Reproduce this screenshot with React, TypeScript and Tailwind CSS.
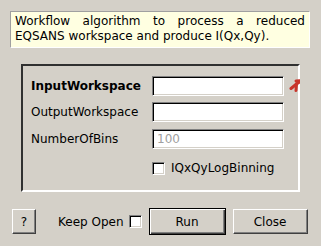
import React from "react";

const sunken =
  "border border-t-[#808080] border-l-[#808080] border-b-white border-r-white shadow-[inset_1px_1px_0_#000,inset_-1px_-1px_0_#d4d0c8] bg-white";

function Field({ label, bold, value, star }: { label: string; bold?: boolean; value?: string; star?: boolean }) {
  return (
    <div className="flex items-center h-[20px]">
      <div className={`w-[121px] shrink-0 whitespace-nowrap ${bold ? "font-bold" : ""}`}>{label}</div>
      <div className={`w-[132px] h-[20px] shrink-0 ${sunken} flex items-center pl-[4px] text-[#a0a0a0]`}>{value}</div>
      {star && (
        <div className="ml-[5px] -mt-[2px] w-[11px] h-[18px] overflow-hidden shrink-0">
          <svg width="18" height="18" viewBox="0 0 18 18">
            <g stroke="#c8342a" strokeWidth="3" strokeLinecap="round">
              <line x1="7.5" y1="8" x2="2" y2="12.5" />
              <line x1="7.5" y1="8" x2="7" y2="14.5" />
              <line x1="7.5" y1="8" x2="14" y2="4" />
              <line x1="7" y1="5" x2="14" y2="4.5" />
            </g>
          </svg>
        </div>
      )}
    </div>
  );
}

function Check() {
  return <div className={`w-[13px] h-[13px] shrink-0 ${sunken}`} />;
}

export default function App() {
  return (
    <div
      className="w-[321px] h-[246px] bg-[#d4d0c8] text-black text-[12px] overflow-hidden flex flex-col"
      style={{ fontFamily: '"DejaVu Sans", sans-serif' }}
    >
      <div className="mt-[11px] ml-[10px] mr-[11px] h-[37px] bg-[#ffffe1] border border-t-[#a0a0a0] border-l-[#a0a0a0] border-b-white border-r-white pl-[4px] pr-[4px] pt-[2px] leading-[15px] text-justify">
        Workflow algorithm to process a reduced EQSANS workspace and produce I(Qx,Qy).
      </div>

      <div className="mt-[16px] ml-[21px] w-[279px] h-[128px] border-2 border-t-[#303030] border-l-[#303030] border-b-white border-r-white pl-[8px] pt-[10px] flex flex-col">
        <Field label="InputWorkspace" bold star />
        <div className="mt-[6px]">
          <Field label="OutputWorkspace" />
        </div>
        <div className="mt-[7px]">
          <Field label="NumberOfBins" value="100" />
        </div>
        <div className="mt-[10px] ml-[121px] flex items-center gap-[6px]">
          <Check />
          <span>IQxQyLogBinning</span>
        </div>
      </div>

      <div className="mt-[16px] flex items-center h-[27px]">
        <button className="ml-[12px] w-[24px] h-[25px] bg-[#d4d0c8] border border-t-white border-l-white border-b-[#404040] border-r-[#404040] shadow-[inset_-1px_-1px_0_#808080] text-[12px]">
          ?
        </button>
        <span className="ml-[22px]">Keep Open</span>
        <div className="ml-[5px]">
          <Check />
        </div>
        <button className="ml-[7px] w-[77px] h-[27px] bg-[#d4d0c8] border border-black shadow-[inset_1px_1px_0_#fff,inset_-1px_-1px_0_#404040,inset_-2px_-2px_0_#808080] text-[12px]">
          Run
        </button>
        <button className="ml-[7px] w-[75px] h-[25px] bg-[#d4d0c8] border border-t-white border-l-white border-b-[#404040] border-r-[#404040] shadow-[inset_-1px_-1px_0_#808080] text-[12px]">
          Close
        </button>
      </div>
    </div>
  );
}
